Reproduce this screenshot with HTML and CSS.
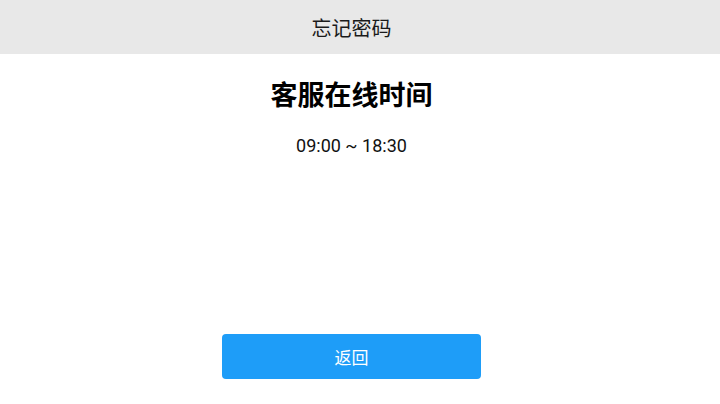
FILE: index.html
```html
<!DOCTYPE html>
<html lang="zh">
<head>
<meta charset="utf-8">
<title>忘记密码</title>
<link rel="stylesheet" href="styles.css">
</head>
<body>
<div class="page">
  <header class="topbar">忘记密码</header>
  <main class="content">
    <h1 class="title">客服在线时间</h1>
    <p class="hours">09:00 ~ 18:30</p>
  </main>
  <div class="actions">
    <button class="back-btn" type="button">返回</button>
  </div>
</div>
</body>
</html>
```
FILE: styles.css
```css
html, body {
  margin: 0;
  padding: 0;
  background: #ffffff;
}
body {
  font-family: "Roboto", "Noto Sans CJK SC", sans-serif;
  color: #111;
}
.page {
  width: 720px;
  height: 404px;
  display: flex;
  flex-direction: column;
}
.topbar {
  height: 54px;
  background: #e8e8e8;
  display: flex;
  align-items: center;
  justify-content: center;
  padding-right: 17px;
  font-size: 20px;
  color: #1a1a1a;
}
.content {
  flex: 1;
  display: flex;
  flex-direction: column;
  align-items: center;
  padding-top: 23px;
  padding-right: 17px;
}
.title {
  margin: 0;
  font-size: 27px;
  line-height: 38px;
  font-weight: 600;
  color: #000;
}
.hours {
  margin: 19px 0 0;
  font-size: 18px;
  line-height: 24px;
  color: #111;
}
.actions {
  display: flex;
  justify-content: center;
  padding-right: 17px;
  padding-bottom: 25px;
}
.back-btn {
  width: 259px;
  height: 45px;
  border: none;
  border-radius: 4px;
  background: #1e9df8;
  color: #fff;
  font-family: "Roboto", "Noto Sans CJK SC", sans-serif;
  font-size: 17px;
  padding: 0;
}
```
